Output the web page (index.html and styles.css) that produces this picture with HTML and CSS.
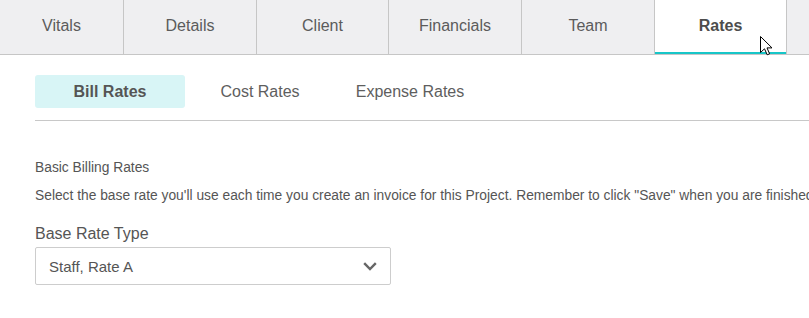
FILE: index.html
```html
<!DOCTYPE html>
<html lang="en">
<head>
<meta charset="utf-8">
<title>Project Rates</title>
<link rel="stylesheet" href="styles.css">
</head>
<body>
<div class="page">
  <nav class="tabs">
    <div class="tab tab-first">Vitals</div>
    <div class="tab">Details</div>
    <div class="tab">Client</div>
    <div class="tab">Financials</div>
    <div class="tab">Team</div>
    <div class="tab tab-active">Rates</div>
    <div class="tab-fill"></div>
  </nav>
  <main class="content">
    <nav class="subtabs">
      <div class="subtab subtab-active">Bill Rates</div>
      <div class="subtab">Cost Rates</div>
      <div class="subtab">Expense Rates</div>
    </nav>
    <section class="billing">
      <h3 class="billing-title">Basic Billing Rates</h3>
      <p class="billing-desc">Select the base rate you'll use each time you create an invoice for this Project. Remember to click "Save" when you are finished.</p>
      <label class="field-label">Base Rate Type</label>
      <div class="select">
        <span class="select-value">Staff, Rate A</span>
        <svg class="chevron" width="14" height="9" viewBox="0 0 14 9"><path d="M1.2 1.2 L7 7 L12.8 1.2" fill="none" stroke="#666" stroke-width="2.4"/></svg>
      </div>
    </section>
  </main>
  <svg class="cursor" width="13" height="20" viewBox="0 0 13 20"><path d="M0.5 0.5 L0.5 16.5 L4.5 12.8 L7.2 18.8 L9.6 17.8 L7 11.9 L12 11.9 Z" fill="#fff" stroke="#000" stroke-width="1" stroke-linejoin="miter"/></svg>
</div>
</body>
</html>
```
FILE: styles.css
```css
* { box-sizing: border-box; }
html, body { margin: 0; padding: 0; background: #fff; }
body {
  font-family: "Liberation Sans", Arial, sans-serif;
  color: #555;
  width: 809px;
  height: 318px;
  overflow: hidden;
}
.page { position: relative; width: 809px; height: 318px; overflow: hidden; }
.tabs {
  display: flex;
  height: 55px;
  background: #efeff1;
  border-bottom: 1px solid #c6c6c6;
}
.tab {
  width: 133px;
  flex: none;
  display: flex;
  align-items: center;
  justify-content: center;
  padding-bottom: 3px;
  border-right: 1px solid #c6c6c6;
  font-size: 16px;
  color: #5b5b5b;
}
.tab-first { width: 124px; }
.tab:nth-child(3) { width: 132px; }
.tab:nth-child(6) { width: 132px; }
.tab-active {
  background: #fff;
  font-weight: bold;
  color: #4d4d4d;
  box-shadow: inset 0 -2px 0 #17c6c8;
}
.tab-fill { flex: 1; }
.content { padding-left: 35px; }
.subtabs {
  display: flex;
  margin-top: 20px;
  padding-bottom: 12px;
  border-bottom: 1px solid #c8c8c8;
}
.subtab {
  width: 150px;
  height: 33px;
  display: flex;
  align-items: center;
  justify-content: center;
  font-size: 16px;
  color: #5e5e5e;
  border-radius: 3px;
}
.subtab-active {
  background: #d8f5f6;
  font-weight: bold;
  color: #555;
}
.billing { display: flex; flex-direction: column; align-items: flex-start; }
.billing-title {
  margin: 39px 0 0;
  font-size: 13.8px;
  font-weight: normal;
  line-height: 16px;
  color: #555;
}
.billing-desc {
  margin: 12px 0 0;
  font-size: 13.8px;
  line-height: 16px;
  white-space: nowrap;
  color: #555;
}
.field-label {
  margin-top: 20px;
  font-size: 16px;
  line-height: 19px;
  color: #555;
}
.select {
  margin-top: 4px;
  width: 356px;
  height: 38px;
  border: 1px solid #cdcdcd;
  border-radius: 2px;
  display: flex;
  align-items: center;
  justify-content: space-between;
  padding: 0 13px 0 13px;
}
.select-value { font-size: 15px; color: #555; }
.chevron { display: block; }
.cursor { position: absolute; left: 760px; top: 36px; }
```
